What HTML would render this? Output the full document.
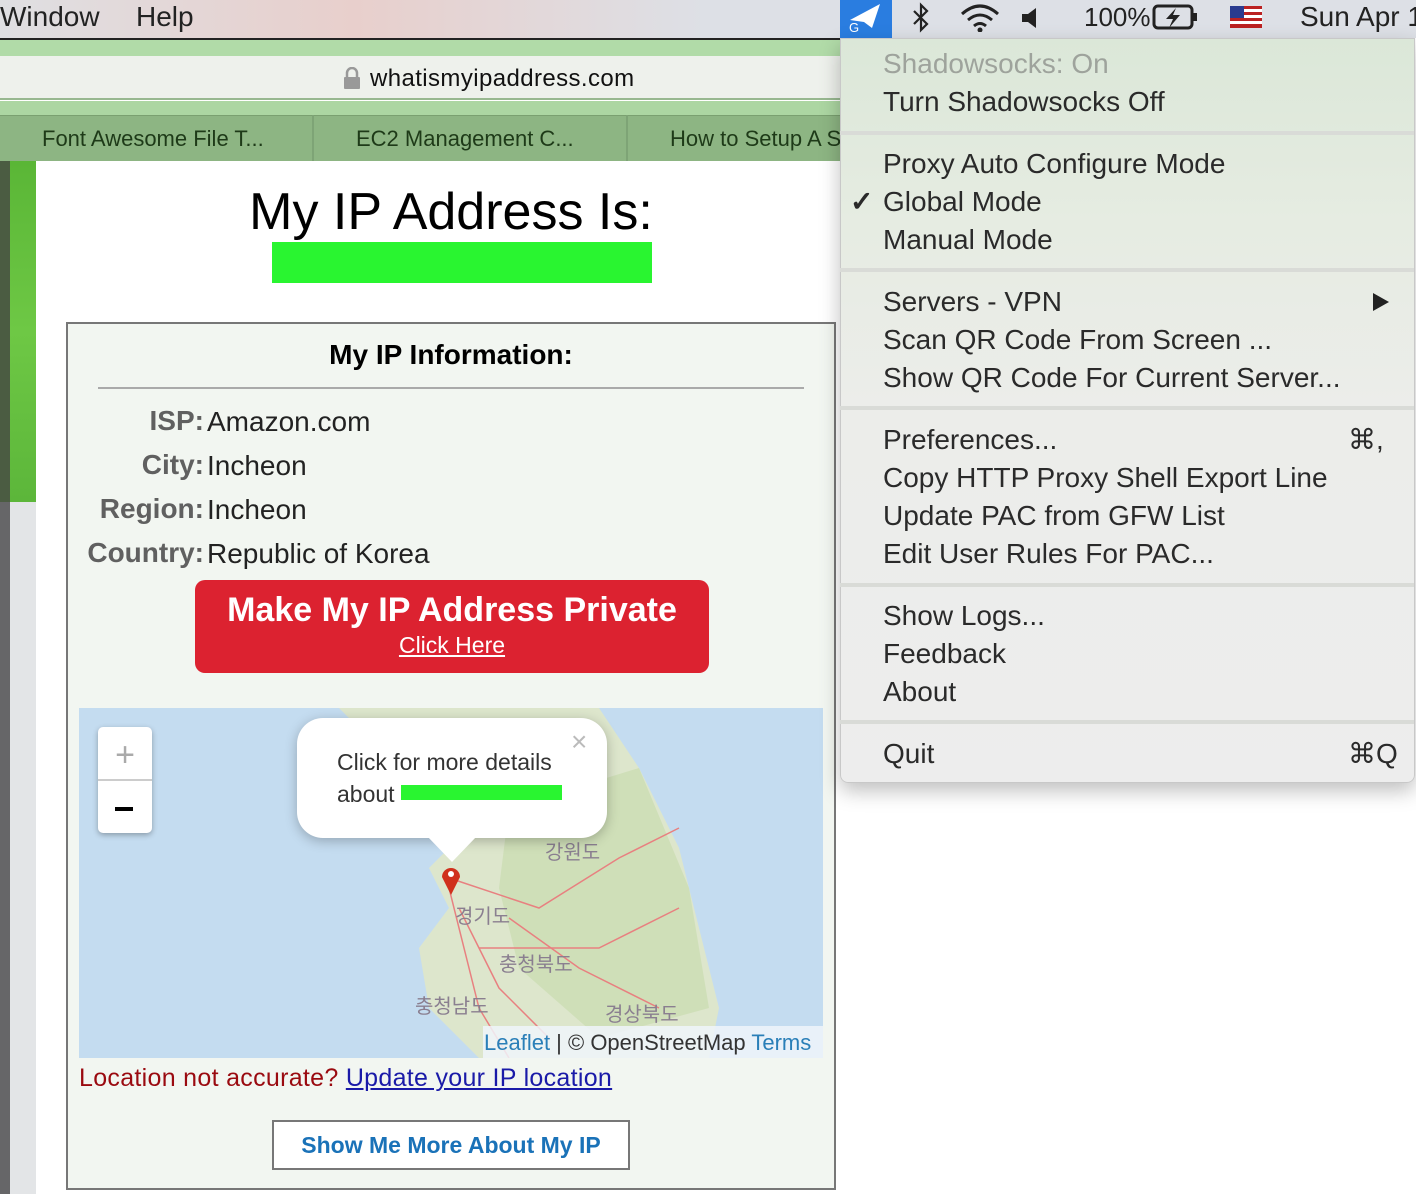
<!DOCTYPE html>
<html><head><meta charset="utf-8"><style>
*{margin:0;padding:0;box-sizing:border-box}
body{width:1416px;height:1194px;position:relative;overflow:hidden;background:#fff;font-family:"Liberation Sans",Arial,sans-serif}
.a{position:absolute}
.mi{position:absolute;left:883px;font-size:28px;color:#2a2a2a;line-height:38px;white-space:nowrap}
.sep{position:absolute;left:840px;width:574px;height:4px;background:#d9dbd7}
.lbl{position:absolute;width:204px;text-align:right;font-weight:bold;color:#606060;font-size:28px}
.val{position:absolute;left:207px;font-size:28px;color:#222}
</style></head><body>
<div class="a" style="left:0;top:0;width:1416px;height:38px;background:linear-gradient(90deg,#dfdfe2 0%,#e8cfcc 25%,#dde0e6 50%,#dde0e6 100%)"></div>
<div class="a" style="left:0;top:38px;width:840px;height:2px;background:#222"></div>
<div class="a" style="left:0;top:0;font-size:28px;color:#222;line-height:34px">Window</div>
<div class="a" style="left:136px;top:0;font-size:28px;color:#222;line-height:34px">Help</div>
<div class="a" style="left:840px;top:0;width:52px;height:38px;background:#2a7de0"></div>
<svg class="a" style="left:846px;top:2px" width="40" height="32"><path d="M4 18 L34 2 L26 26 L18 20 Z" fill="#fff"/><text x="3" y="30" font-size="13" fill="#fff" font-family="Liberation Sans">G</text></svg>
<svg class="a" style="left:910px;top:2px" width="22" height="32"><path d="M4 9 L17 22 L11 28 V3 L17 9 L4 22" stroke="#222" stroke-width="2.2" fill="none"/></svg>
<svg class="a" style="left:958px;top:2px" width="44" height="30"><path d="M4 12 Q22 -4 40 12 M10 18 Q22 8 34 18 M16 24 Q22 19 28 24" stroke="#222" stroke-width="3" fill="none"/><circle cx="22" cy="28" r="2.5" fill="#222"/></svg>
<svg class="a" style="left:1020px;top:6px" width="24" height="24"><path d="M2 8 H8 L16 2 V22 L8 16 H2 Z" fill="#222"/></svg>
<div class="a" style="left:1084px;top:0;font-size:26px;color:#222;line-height:34px">100%</div>
<svg class="a" style="left:1152px;top:4px" width="48" height="26"><rect x="2" y="2" width="38" height="22" rx="4" stroke="#222" stroke-width="3" fill="none"/><rect x="41" y="9" width="4" height="8" fill="#222"/><path d="M24 4 L14 15 H21 L17 24 L28 11 H21 Z" fill="#222"/></svg>
<svg class="a" style="left:1230px;top:6px" width="32" height="22"><rect width="32" height="22" fill="#b22"/><rect y="3" width="32" height="3" fill="#fff"/><rect y="9" width="32" height="3" fill="#fff"/><rect y="15" width="32" height="3" fill="#fff"/><rect width="14" height="12" fill="#2a3b8f"/></svg>
<div class="a" style="left:1300px;top:0;font-size:28px;color:#222;line-height:34px;white-space:nowrap">Sun Apr 1</div>

<div class="a" style="left:0;top:40px;width:840px;height:16px;background:#b1dba8"></div>
<div class="a" style="left:0;top:56px;width:840px;height:44px;background:#eef1ec;border-bottom:2px solid #98b890"></div>
<svg class="a" style="left:343px;top:67px" width="18" height="22"><path d="M4 10 V6 A5 5 0 0 1 14 6 V10" stroke="#999" stroke-width="2.5" fill="none"/><rect x="1" y="10" width="16" height="12" rx="1" fill="#999"/></svg>
<div class="a" style="left:370px;top:65px;font-size:24px;color:#111;letter-spacing:0.4px">whatismyipaddress.com</div>
<div class="a" style="left:0;top:101px;width:840px;height:14px;background:#acd6a2"></div>
<div class="a" style="left:0;top:115px;width:840px;height:46px;background:#8db583;border-top:1px solid #7aa070"></div>
<div class="a" style="left:312px;top:115px;width:2px;height:46px;background:#7ea476"></div>
<div class="a" style="left:626px;top:115px;width:2px;height:46px;background:#7ea476"></div>
<div class="a" style="left:42px;top:126px;font-size:22px;color:#1e3a18">Font Awesome File T...</div>
<div class="a" style="left:356px;top:126px;font-size:22px;color:#1e3a18">EC2 Management C...</div>
<div class="a" style="left:670px;top:126px;font-size:22px;color:#1e3a18;white-space:nowrap">How to Setup A S</div>

<div class="a" style="left:0;top:161px;width:10px;height:341px;background:#4b5c42"></div>
<div class="a" style="left:10px;top:161px;width:26px;height:341px;background:linear-gradient(180deg,#5ab636,#6ec845,#5cb63a)"></div>
<div class="a" style="left:0;top:502px;width:10px;height:692px;background:#666668"></div>
<div class="a" style="left:10px;top:502px;width:26px;height:692px;background:#e3e5e7"></div>

<div class="a" style="left:36px;top:183px;width:830px;text-align:center;font-size:52px;color:#000;line-height:58px">My IP Address Is:</div>
<div class="a" style="left:272px;top:242px;width:380px;height:41px;background:#29f530"></div>

<div class="a" style="left:66px;top:322px;width:770px;height:868px;background:#f2f6f1;border:2px solid #777"></div>
<div class="a" style="left:66px;top:339px;width:770px;text-align:center;font-size:28px;font-weight:bold;color:#000">My IP Information:</div>
<div class="a" style="left:98px;top:387px;width:706px;height:2px;background:#aaa"></div>
<div class="lbl" style="left:0;top:405px">ISP:</div><div class="val" style="top:406px">Amazon.com</div>
<div class="lbl" style="left:0;top:449px">City:</div><div class="val" style="top:450px">Incheon</div>
<div class="lbl" style="left:0;top:493px">Region:</div><div class="val" style="top:494px">Incheon</div>
<div class="lbl" style="left:0;top:537px">Country:</div><div class="val" style="top:538px">Republic of Korea</div>

<div class="a" style="left:195px;top:580px;width:514px;height:93px;background:#dc2230;border-radius:10px"></div>
<div class="a" style="left:195px;top:591px;width:514px;text-align:center;font-size:34px;font-weight:bold;color:#fff">Make My IP Address Private</div>
<div class="a" style="left:195px;top:632px;width:514px;text-align:center;font-size:23px;color:#fff;text-decoration:underline">Click Here</div>

<div class="a" style="left:79px;top:708px;width:744px;height:350px;background:#c4dcf0;overflow:hidden">
<svg width="744" height="350" style="position:absolute;left:0;top:0">
<path d="M260 0 L520 0 L560 60 L600 140 L620 220 L640 300 L630 350 L400 350 L350 300 L340 240 L370 200 L350 160 L390 120 L330 80 L300 40 Z" fill="#dde6cc"/>
<path d="M430 100 L560 60 L610 180 L630 300 L520 330 L440 260 L420 180 Z" fill="#cfdfb8"/>
<g stroke="#e88080" stroke-width="1.5" fill="none"><path d="M370 170 L460 200 L540 150 L600 120"/><path d="M380 200 L420 280 L470 330"/><path d="M430 210 L500 260 L580 300"/><path d="M400 240 L520 240 L600 200"/><path d="M370 180 L400 300 L430 350"/></g>
</svg>
<div class="a" style="left:466px;top:128px;font-size:20px;color:#8a7f90;font-family:'Noto Sans CJK KR',sans-serif">강원도</div>
<div class="a" style="left:376px;top:192px;font-size:20px;color:#8a7f90;font-family:'Noto Sans CJK KR',sans-serif">경기도</div>
<div class="a" style="left:420px;top:240px;font-size:20px;color:#8a7f90;font-family:'Noto Sans CJK KR',sans-serif">충청북도</div>
<div class="a" style="left:336px;top:282px;font-size:20px;color:#8a7f90;font-family:'Noto Sans CJK KR',sans-serif">충청남도</div>
<div class="a" style="left:526px;top:290px;font-size:20px;color:#8a7f90;font-family:'Noto Sans CJK KR',sans-serif">경상북도</div>
<svg class="a" style="left:361px;top:157px" width="22" height="32"><path d="M11 30 L2 12 A9 9 0 1 1 20 12 Z" fill="#d0301c"/><circle cx="11" cy="9" r="3" fill="#fff"/></svg>
<div class="a" style="left:404px;top:318px;width:340px;height:32px;background:rgba(240,244,250,.85)"></div>
<div class="a" style="left:405px;top:322px;font-size:22px;color:#333;white-space:nowrap"><span style="color:#2a7fb8">Leaflet</span> | © OpenStreetMap <span style="color:#2a7fb8">Terms</span></div>
</div>
<div class="a" style="left:98px;top:727px;width:54px;height:106px;background:#fff;border-radius:5px;box-shadow:0 2px 6px rgba(0,0,0,.3)"></div>
<div class="a" style="left:98px;top:779px;width:54px;height:2px;background:#ccc"></div>
<div class="a" style="left:98px;top:735px;width:54px;text-align:center;font-size:34px;color:#aaa;line-height:40px">+</div>
<div class="a" style="left:115px;top:807px;width:18px;height:4px;background:#000"></div>
<div class="a" style="left:297px;top:718px;width:310px;height:120px;background:#fff;border-radius:26px;box-shadow:0 3px 12px rgba(0,0,0,.25)"></div>
<svg class="a" style="left:427px;top:836px" width="50" height="30"><path d="M0 0 L25 26 L50 0 Z" fill="#fff"/></svg>
<div class="a" style="left:571px;top:726px;font-size:28px;color:#bbb">×</div>
<div class="a" style="left:337px;top:746px;font-size:23px;color:#333;line-height:32px">Click for more details<br>about</div>
<div class="a" style="left:401px;top:785px;width:161px;height:15px;background:#29f530"></div>

<div class="a" style="left:79px;top:1064px;font-size:25px;color:#9a0a10;white-space:nowrap;letter-spacing:0.3px">Location not accurate? <span style="color:#1a1aa8;text-decoration:underline">Update your IP location</span></div>
<div class="a" style="left:272px;top:1120px;width:358px;height:50px;background:#fff;border:2px solid #777;text-align:center;font-size:23px;font-weight:bold;color:#1a72b8;line-height:46px">Show Me More About My IP</div>

<div class="a" style="left:840px;top:38px;width:575px;height:745px;border-radius:0 0 8px 8px;background:linear-gradient(180deg,#dbe7d8 0%,#e6ece2 25%,#ecedea 50%,#ededed 100%);box-shadow:0 8px 20px rgba(0,0,0,.25);border:1px solid #c8c8c8"></div>
<div class="sep" style="top:131px"></div>
<div class="sep" style="top:268px"></div>
<div class="sep" style="top:406px"></div>
<div class="sep" style="top:583px"></div>
<div class="sep" style="top:720px"></div>
<div class="mi" style="top:45px;color:#9ea39c">Shadowsocks: On</div>
<div class="mi" style="top:83px">Turn Shadowsocks Off</div>
<div class="mi" style="top:145px">Proxy Auto Configure Mode</div>
<div class="mi" style="left:850px;top:183px;font-weight:bold">✓</div>
<div class="mi" style="top:183px">Global Mode</div>
<div class="mi" style="top:221px">Manual Mode</div>
<div class="mi" style="top:283px">Servers - VPN</div>
<svg class="a" style="left:1371px;top:292px" width="20" height="20"><path d="M2 1 L18 10 L2 19 Z" fill="#222"/></svg>
<div class="mi" style="top:321px">Scan QR Code From Screen ...</div>
<div class="mi" style="top:359px">Show QR Code For Current Server...</div>
<div class="mi" style="top:421px">Preferences...</div>
<div class="mi" style="left:1348px;top:421px">⌘,</div>
<div class="mi" style="top:459px">Copy HTTP Proxy Shell Export Line</div>
<div class="mi" style="top:497px">Update PAC from GFW List</div>
<div class="mi" style="top:535px">Edit User Rules For PAC...</div>
<div class="mi" style="top:597px">Show Logs...</div>
<div class="mi" style="top:635px">Feedback</div>
<div class="mi" style="top:673px">About</div>
<div class="mi" style="top:735px">Quit</div>
<div class="mi" style="left:1348px;top:735px">⌘Q</div>
</body></html>
